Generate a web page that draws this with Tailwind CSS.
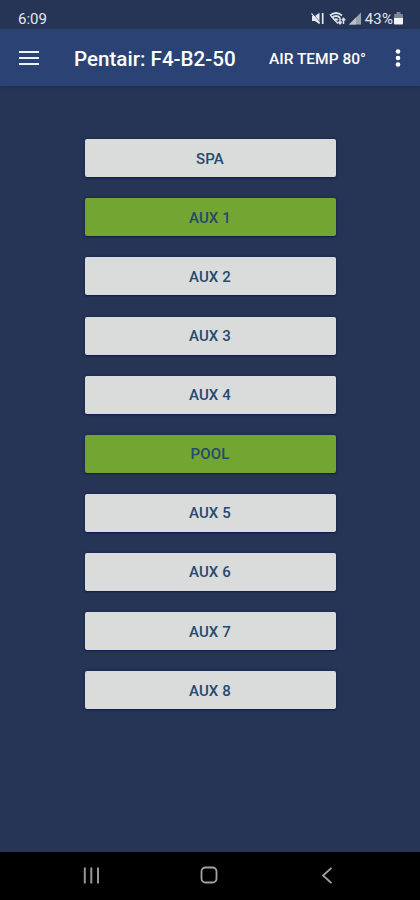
<!DOCTYPE html>
<html lang="en">
<head>
<meta charset="utf-8">
<title>Pentair</title>
<script src="https://cdn.jsdelivr.net/npm/@tailwindcss/browser@4"></script>
</head>
<body class="flex h-[900px] w-[420px] flex-col overflow-hidden bg-[#263456] font-['Roboto',sans-serif]">
  <div class="flex h-[29px] shrink-0 items-center justify-between bg-[#263455] pt-[8px] pr-[17px] pl-[18px] text-[#e3e7ef]">
    <span class="text-[15px] leading-5">6:09</span>
    <div class="flex items-center">
      <svg class="mr-[5px]" width="13" height="13" viewBox="0 0 13 13" fill="none" stroke="#e3e7ef"><path d="M1 4h3L8.500 .8v11.400L4 9H1z" fill="#e3e7ef" stroke="none"/><path d="M1.300 1l8.500 10" stroke="#263455" stroke-width=".8"/><path d="M.5 1.300l8.200 9.900" stroke-width="1.200"/><path d="M11.700 1v11" stroke-width="1.700"/></svg>
      <svg class="mr-[3px]" width="17" height="13" viewBox="0 0 17 13" fill="none" stroke="#dde2ea"><path d="M1 3.400C4.700 .5 9.300 .5 13 3.400M3 5.700c2.500-2 5.500-2 8 0M5 8c1.300-1 2.700-1 4 0" stroke-width="1.900"/><path d="M2 4l7 7.500" stroke-width="1.500"/><path d="M11 5.500v6M9.300 9.800L11 11.800l1.700-2M14.500 12V6.500M12.800 8.300l1.700-2 1.700 2" stroke-width="1.500"/></svg>
      <svg class="mr-[4px]" width="12" height="13" viewBox="0 0 12 13"><path d="M0 12.500L12 .5v12z" fill="#98a4b0"/><path d="M0 12.500l7-7v7z" fill="#b8c1c9"/></svg>
      <span class="text-[15px] leading-5 tracking-[0.1px]">43%</span>
      <svg class="ml-[1px]" width="9" height="13" viewBox="0 0 9 13"><path d="M2.500 0h4v2H8q1 0 1 1v3H0V3q0-1 1-1h1.500z" fill="#7c859b"/><path d="M0 6h9v5.500q0 1-1 1H1q-1 0-1-1z" fill="#f2f4f7"/></svg>
    </div>
  </div>
  <header class="flex h-[57px] shrink-0 items-center bg-[#2b4374] pr-[19px] pl-[19px] text-white shadow-[0_1px_2px_#202c4a]">
    <button class="flex h-[14px] w-5 flex-col justify-between" aria-label="Menu">
      <span class="h-[2px] w-full bg-[#f0f2fa]"></span><span class="h-[2px] w-full bg-[#f0f2fa]"></span><span class="h-[2px] w-full bg-[#f0f2fa]"></span>
    </button>
    <h1 class="ml-[35px] w-[195px] pt-[2px] text-[20.6px] leading-6 font-medium whitespace-nowrap">Pentair: F4-B2-50</h1>
    <span class="pt-[2px] text-[15.5px] leading-5 font-medium whitespace-nowrap">AIR TEMP 80°</span>
    <svg class="ml-auto shrink-0" width="6" height="18" viewBox="0 0 6 18" fill="#fff"><circle cx="3" cy="2.500" r="2.300"/><circle cx="3" cy="9" r="2.300"/><circle cx="3" cy="15.500" r="2.300"/></svg>
  </header>
  <main class="flex grow flex-col items-center gap-[21.05px] pt-[53.4px] text-[15px] font-medium text-[#25496f] [&>button]:h-[38px] [&>button]:w-[251px] [&>button]:shrink-0 [&>button]:rounded-[2px] [&>button]:pt-[2px] [&>button]:tracking-[0.15px] [&>button]:shadow-[0_0_2px_1px_#16245080,0_1px_1px_#121c4a]">
    <button class="bg-[#dadcdb]">SPA</button>
    <button class="bg-[#73a533]">AUX 1</button>
    <button class="bg-[#dadcdb]">AUX 2</button>
    <button class="bg-[#dadcdb]">AUX 3</button>
    <button class="bg-[#dadcdb]">AUX 4</button>
    <button class="bg-[#73a533]">POOL</button>
    <button class="bg-[#dadcdb]">AUX 5</button>
    <button class="bg-[#dadcdb]">AUX 6</button>
    <button class="bg-[#dadcdb]">AUX 7</button>
    <button class="bg-[#dadcdb]">AUX 8</button>
  </main>
  <nav class="flex h-[48px] shrink-0 items-center bg-black pb-[2px] pl-[83px]">
    <svg width="17" height="17" viewBox="0 0 17 17" stroke="#979797" stroke-width="2"><path d="M1.800 .5v16M8.300 .5v16M15 .5v16"/></svg>
    <svg class="ml-[100px]" width="18" height="18" viewBox="0 0 18 18" fill="none" stroke="#a3a3a3" stroke-width="1.800"><rect x="1.500" y="1.500" width="15" height="15" rx="4"/></svg>
    <svg class="ml-[103px]" width="12" height="17" viewBox="0 0 12 17" fill="none" stroke="#a3a3a3" stroke-width="1.800"><path d="M10.500 .8L2 8.500l8.500 7.700"/></svg>
  </nav>
</body>
</html>
